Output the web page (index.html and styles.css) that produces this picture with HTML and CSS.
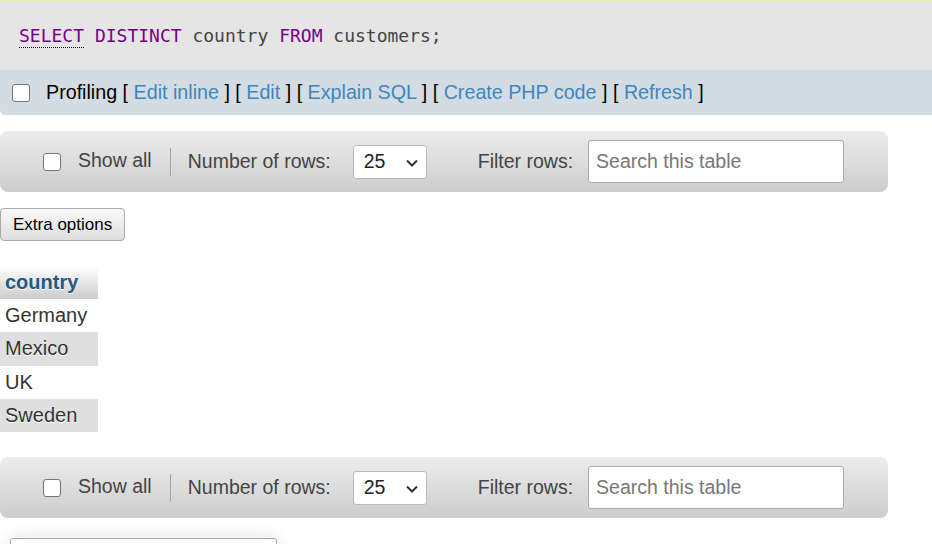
FILE: index.html
```html
<!DOCTYPE html>
<html lang="en">
<head>
<meta charset="utf-8">
<title>SQL result</title>
<link rel="stylesheet" href="styles.css">
</head>
<body>
<div class="sqlbox">
  <code class="sql"><span class="kw ul">SELECT</span> <span class="kw">DISTINCT</span> country <span class="kw">FROM</span> customers;</code>
</div>
<div class="profiling">
  <span class="cb"></span>
  <span class="plinks">Profiling [ <a href="#">Edit inline</a> ] [ <a href="#">Edit</a> ] [ <a href="#">Explain SQL</a> ] [ <a href="#">Create PHP code</a> ] [ <a href="#">Refresh</a> ]</span>
</div>

<div class="navbar">
  <span class="cb"></span>
  <span class="lbl showall">Show all</span>
  <span class="sep"></span>
  <span class="lbl">Number of rows:</span>
  <span class="select">25
    <svg class="chev" width="14" height="10" viewBox="0 0 14 10"><path d="M2 2.5 L7 7.5 L12 2.5" fill="none" stroke="#333" stroke-width="2"/></svg>
  </span>
  <span class="lbl filter">Filter rows:</span>
  <span class="search">Search this table</span>
</div>

<button class="extra">Extra options</button>

<table class="data">
  <thead><tr><th>country</th></tr></thead>
  <tbody>
    <tr class="odd"><td>Germany</td></tr>
    <tr class="even"><td>Mexico</td></tr>
    <tr class="odd"><td>UK</td></tr>
    <tr class="even"><td>Sweden</td></tr>
  </tbody>
</table>

<div class="navbar navbottom">
  <span class="cb"></span>
  <span class="lbl showall">Show all</span>
  <span class="sep"></span>
  <span class="lbl">Number of rows:</span>
  <span class="select">25
    <svg class="chev" width="14" height="10" viewBox="0 0 14 10"><path d="M2 2.5 L7 7.5 L12 2.5" fill="none" stroke="#333" stroke-width="2"/></svg>
  </span>
  <span class="lbl filter">Filter rows:</span>
  <span class="search">Search this table</span>
</div>

<div class="opsbox"></div>
</body>
</html>
```

FILE: styles.css
```css
html, body {
  margin: 0;
  padding: 0;
  background: #fff;
  font-family: "Liberation Sans", Arial, sans-serif;
  overflow: hidden;
}

.sqlbox {
  background: #e5e5e5;
  border-top: 1px solid #e9f3a4;
  height: 69px;
  box-sizing: content-box;
  padding: 0 19px;
  display: flex;
  align-items: center;
}

.sql {
  font-family: "DejaVu Sans Mono", "Liberation Mono", monospace;
  font-size: 18px;
  line-height: 22px;
  color: #444;
  margin-top: 0;
}

.kw { color: #770088; }
.ul { border-bottom: 1px dotted #000; padding-bottom: 1px; }

.profiling {
  background: #d3dce3;
  height: 45px;
  display: flex;
  align-items: center;
  padding-left: 12px;
  border-bottom-left-radius: 5px;
}

.cb {
  width: 18px;
  height: 18px;
  box-sizing: border-box;
  border: 1px solid #767676;
  border-radius: 3px;
  background: #fff;
  flex: none;
}

.plinks {
  margin-left: 16px;
  font-size: 19.7px;
  color: #000;
  margin-top: 0;
}

.plinks a {
  color: #3f86bf;
  text-decoration: none;
}

.navbar {
  margin-top: 16px;
  width: 888px;
  height: 61px;
  border-radius: 8px;
  background: linear-gradient(#ececec, #cdcdcd);
  display: flex;
  align-items: center;
  padding-left: 43px;
  box-sizing: border-box;
  font-size: 19.5px;
  color: #444;
}

.navbottom { margin-top: 25px; }

.lbl { white-space: nowrap; }
.showall { margin-left: 17px; margin-top: -2px; }

.sep {
  width: 1px;
  height: 28px;
  background: #9aa3ac;
  border-right: 1px solid #d6e2ee;
  margin: 0 16px 0 18px;
}

.select {
  margin-left: 22px;
  width: 74px;
  height: 34px;
  box-sizing: border-box;
  background: #fff;
  border: 1px solid #bbb;
  border-radius: 3px;
  display: flex;
  align-items: center;
  padding-left: 10px;
  color: #222;
  position: relative;
}

.chev {
  position: absolute;
  right: 7px;
  top: 12px;
}

.filter { margin-left: 51px; }

.search {
  margin-left: 15px;
  width: 256px;
  height: 43px;
  box-sizing: border-box;
  background: #fff;
  border: 1px solid #aaa;
  border-radius: 3px;
  display: flex;
  align-items: center;
  padding-left: 7px;
  color: #777;
  margin-top: 0;
}

.extra {
  display: block;
  margin: 16px 0 0 0;
  height: 33px;
  padding: 0 12px;
  font-family: "Liberation Sans", Arial, sans-serif;
  font-size: 17px;
  color: #000;
  background: linear-gradient(#f9f9f9, #dedede);
  border: 1px solid #aaa;
  border-radius: 4px;
}

.data {
  margin-top: 25px;
  border-collapse: collapse;
  width: 98px;
  font-size: 20px;
}

.data th {
  text-align: left;
  padding: 5px 5px;
  line-height: 23px;
  height: 33px;
  box-sizing: border-box;
  background: linear-gradient(#fff, #ccc);
  color: #235a81;
  font-weight: bold;
  text-shadow: 0 1px 0 #fff;
}

.data td {
  padding: 5px 5px;
  line-height: 23.3px;
  color: #333;
  text-shadow: 0 1px 0 #fff;
}

.data tr.odd td { background: #fff; }
.data tr.even td { background: #dfdfdf; }

.opsbox {
  margin: 20px 0 0 10px;
  width: 265px;
  height: 40px;
  border: 1px solid #aaa;
  border-radius: 3px;
  background: #fff;
  box-shadow: 0 0 18px rgba(0, 0, 0, 0.12);
}
```
